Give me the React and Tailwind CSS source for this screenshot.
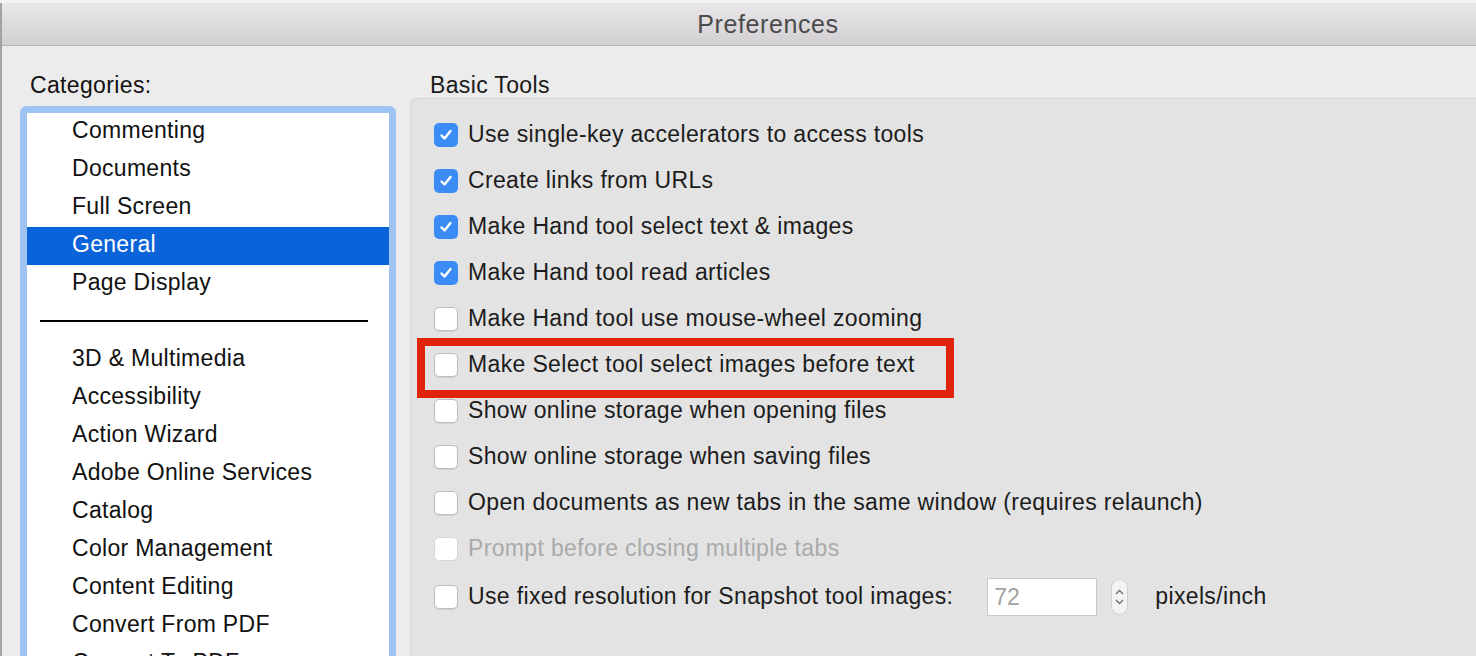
import React from 'react';

const categoriesTop = ['Commenting', 'Documents', 'Full Screen', 'General', 'Page Display'];
const categoriesBottom = [
  '3D & Multimedia',
  'Accessibility',
  'Action Wizard',
  'Adobe Online Services',
  'Catalog',
  'Color Management',
  'Content Editing',
  'Convert From PDF',
  'Convert To PDF',
];

const options = [
  { label: 'Use single-key accelerators to access tools', checked: true },
  { label: 'Create links from URLs', checked: true },
  { label: 'Make Hand tool select text & images', checked: true },
  { label: 'Make Hand tool read articles', checked: true },
  { label: 'Make Hand tool use mouse-wheel zooming', checked: false },
  { label: 'Make Select tool select images before text', checked: false, highlight: true },
  { label: 'Show online storage when opening files', checked: false },
  { label: 'Show online storage when saving files', checked: false },
  { label: 'Open documents as new tabs in the same window (requires relaunch)', checked: false },
  { label: 'Prompt before closing multiple tabs', checked: false, disabled: true },
];

function Checkbox({ checked, disabled }) {
  if (checked) {
    return (
      <div className="w-[24px] h-[24px] rounded-[5px] bg-[#3b8df5] flex items-center justify-center shrink-0">
        <svg width="16" height="16" viewBox="0 0 16 16" fill="none">
          <path d="M3.5 8.5 L6.5 11.5 L12.5 4" stroke="white" strokeWidth="2.4" strokeLinecap="round" strokeLinejoin="round" />
        </svg>
      </div>
    );
  }
  return (
    <div
      className={`w-[24px] h-[24px] rounded-[5px] bg-white border shrink-0 ${
        disabled ? 'border-[#d6d6d6]' : 'border-[#bdbdbd] shadow-[0_1px_1px_rgba(0,0,0,0.08)]'
      }`}
    />
  );
}

function CategoryRow({ name }) {
  const selected = name === 'General';
  return (
    <div
      className={`h-[38px] flex items-center pl-[45px] pb-[3px] text-[23px] tracking-[0.3px] ${
        selected ? 'bg-[#0b63d9] text-white' : 'text-[#111]'
      }`}
    >
      {name}
    </div>
  );
}

export default function App() {
  return (
    <div
      className="w-[1476px] h-[656px] overflow-hidden bg-white"
      style={{ fontFamily: '"Liberation Sans", Arial, sans-serif' }}
    >
      {/* bits of the window behind */}
      <div className="h-[3px] bg-[#f4f4f4]" />

      <div className="h-[653px] border-l-2 border-[#a3a3a3] bg-[#ececec] flex flex-col">
        {/* title bar */}
        <div className="h-[43px] shrink-0 bg-gradient-to-b from-[#e9e7e9] to-[#d1cfd1] border-b border-[#b4b4b4] flex items-center justify-center pl-[58px] pt-[2px]">
          <span className="text-[25px] tracking-[0.6px] text-[#4b4b4b]">Preferences</span>
        </div>

        <div className="flex flex-1 min-h-0">
          {/* left column */}
          <div className="w-[388px] shrink-0 pl-[18px] flex flex-col">
            <div className="pl-[10px] pt-[28px] h-[60px] text-[23px] tracking-[0.35px] text-[#111] leading-none">Categories:</div>
            <div className="w-[376px] flex-1 rounded-t-[7px] border-[7px] border-b-0 border-[#9fc3f2] bg-white overflow-hidden">
              {categoriesTop.map((c) => (
                <CategoryRow key={c} name={c} />
              ))}
              <div className="h-[38px] flex items-center pl-[13px] pr-[21px] pb-[2px]">
                <div className="h-[2px] w-full bg-black" />
              </div>
              {categoriesBottom.map((c) => (
                <CategoryRow key={c} name={c} />
              ))}
            </div>
          </div>

          {/* right column */}
          <div className="flex-1 flex flex-col pl-[20px]">
            <div className="pl-[20px] pt-[28px] h-[52px] text-[23px] tracking-[0.35px] text-[#1a1a1a] leading-none">Basic Tools</div>
            <div className="flex-1 rounded-tl-[8px] border-t border-l border-[#d6d6d6] bg-[#e3e3e3] pt-[13px]">
              {options.map((o) => (
                <div key={o.label} className="relative h-[46px] flex items-center pl-[23px] gap-[10px]">
                  <Checkbox checked={o.checked} disabled={o.disabled} />
                  <span className={`text-[23px] tracking-[0.35px] pb-[2px] ${o.disabled ? 'text-[#aaaaaa]' : 'text-[#1c1c1c]'}`}>{o.label}</span>
                  {o.highlight && (
                    <div className="absolute left-[6px] top-[-4px] w-[537px] h-[60px] border-[8px] border-[#e0230b] pointer-events-none" />
                  )}
                </div>
              ))}
              <div className="h-[50px] flex items-center pl-[23px]">
                <Checkbox checked={false} />
                <span className="ml-[10px] text-[23px] tracking-[0.35px] pb-[2px] text-[#1c1c1c]">Use fixed resolution for Snapshot tool images:</span>
                <div className="ml-[34px] w-[110px] h-[38px] bg-white border border-[#c9c9c9] flex items-center pl-[6px] text-[23px] text-[#a3a3a3]">
                  72
                </div>
                <div className="ml-[14px] w-[17px] h-[36px] rounded-full bg-[#f3f3f3] border border-[#cfcfcf] flex flex-col items-center justify-center gap-[4px]">
                  <svg width="9" height="6" viewBox="0 0 9 6" fill="none">
                    <path d="M1 5 L4.5 1.5 L8 5" stroke="#6b6b6b" strokeWidth="1.3" />
                  </svg>
                  <svg width="9" height="6" viewBox="0 0 9 6" fill="none">
                    <path d="M1 1 L4.5 4.5 L8 1" stroke="#6b6b6b" strokeWidth="1.3" />
                  </svg>
                </div>
                <span className="ml-[27px] text-[23px] tracking-[0.35px] pb-[2px] text-[#1c1c1c]">pixels/inch</span>
              </div>
            </div>
          </div>
        </div>
      </div>
    </div>
  );
}
